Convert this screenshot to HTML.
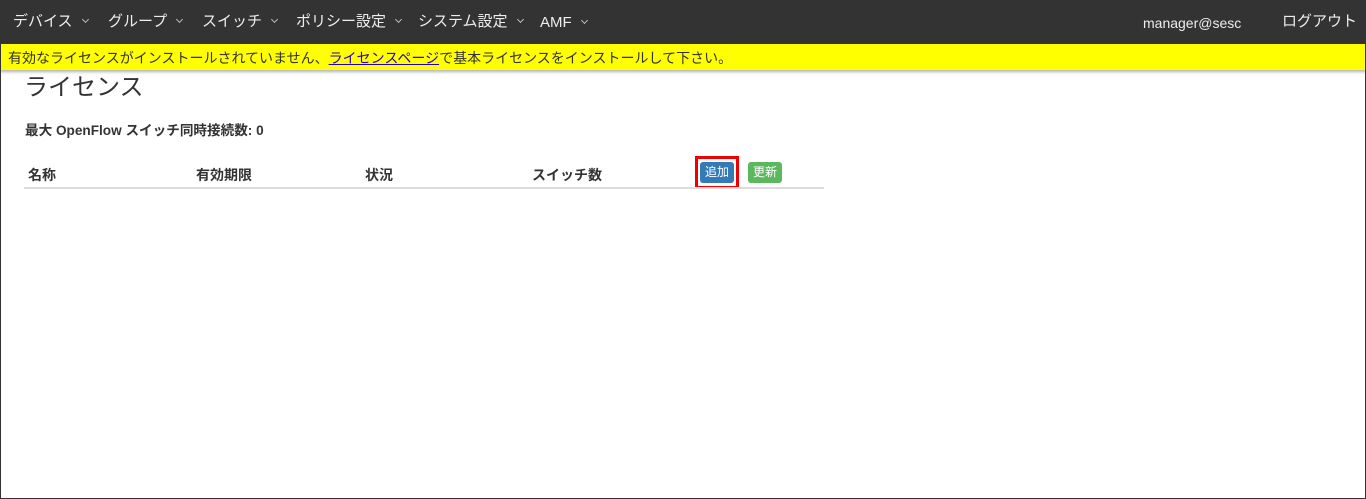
<!DOCTYPE html>
<html><head><meta charset="utf-8"><style>
*{margin:0;padding:0;box-sizing:border-box}
body{width:1366px;height:499px;overflow:hidden;background:#fff;font-family:"Liberation Sans","Noto Sans CJK JP",sans-serif;position:relative}
.frame{position:absolute;left:0;top:0;width:1366px;height:499px;border:1px solid #333;z-index:5;pointer-events:none}
.nav{position:absolute;left:0;top:0;width:1366px;height:44px;background:#333;color:#eee;font-size:15px}
.nav span{position:absolute;top:12px;white-space:nowrap;line-height:20px}
.c{display:inline-block;width:5px;height:5px;border-right:1px solid #bbb;border-bottom:1px solid #bbb;transform:rotate(45deg);margin-left:10px;vertical-align:4px}
.warn{position:absolute;left:0;top:44px;width:1366px;height:26px;background:#ff0;font-size:14px;color:#333;padding:4px 0 0 8px;box-shadow:0 2px 3px rgba(0,0,0,.3)}
.warn a{color:#2a00c8;text-decoration:underline}
h1{position:absolute;left:24px;top:67px;font-size:24px;font-weight:normal;color:#333}
.mx{position:absolute;left:25px;top:119px;font-size:13.6px;font-weight:bold;color:#333}
.th{position:absolute;top:165px;font-size:14px;font-weight:bold;color:#333}
.line{position:absolute;left:24px;top:187px;width:800px;height:2px;background:#ddd}
.btn{position:absolute;top:162px;height:21px;border-radius:3px;color:#fff;font-size:12px;text-align:center;line-height:21px}
</style></head><body>
<div class="frame"></div>
<div class="nav">
<span style="left:13px">デバイス<i class="c"></i></span>
<span style="left:108px">グループ<i class="c"></i></span>
<span style="left:202px">スイッチ<i class="c"></i></span>
<span style="left:296px">ポリシー設定<i class="c"></i></span>
<span style="left:418px">システム設定<i class="c"></i></span>
<span style="left:540px;top:13px">AMF<i class="c"></i></span>
<span style="left:1143px;font-size:14px;top:13px">manager@sesc</span>
<span style="left:1282px">ログアウト</span>
</div>
<div class="warn">有効なライセンスがインストールされていません、<a>ライセンスページ</a>で基本ライセンスをインストールして下さい。</div>
<h1>ライセンス</h1>
<div class="mx">最大 OpenFlow スイッチ同時接続数: 0</div>
<div class="th" style="left:28px">名称</div>
<div class="th" style="left:196px">有効期限</div>
<div class="th" style="left:365px">状況</div>
<div class="th" style="left:532px">スイッチ数</div>
<div style="position:absolute;left:695px;top:156px;width:44px;height:33px;border:3px solid #e00"></div>
<div class="btn" style="left:700px;width:34px;background:#337ab7">追加</div>
<div class="btn" style="left:748px;width:34px;background:#5cb85c">更新</div>
<div class="line"></div>
</body></html>
